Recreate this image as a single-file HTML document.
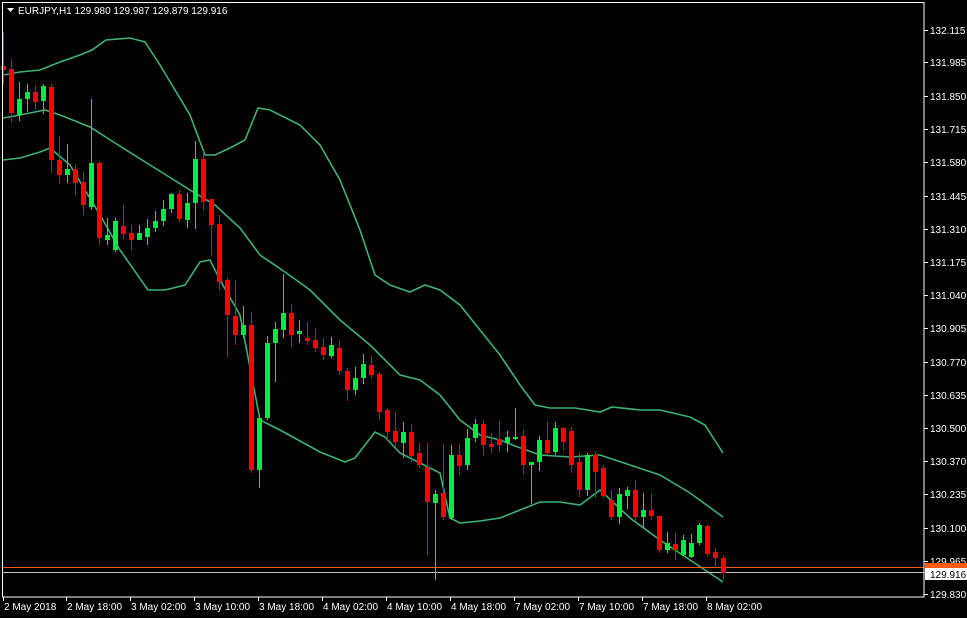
<!DOCTYPE html>
<html><head><meta charset="utf-8"><style>
html,body{margin:0;padding:0;background:#000;width:967px;height:618px;overflow:hidden}
svg{display:block}
text{font-family:"Liberation Sans",sans-serif;font-size:10px;fill:#fff}
</style></head><body>
<svg width="967" height="618" viewBox="0 0 967 618" xmlns="http://www.w3.org/2000/svg">
<rect width="967" height="618" fill="#000"/>
<g fill="none" stroke="#3cb371" stroke-width="1.6">
<polyline points="3,75 20,72 40,70 60,62 80,55 92,50 106,40 130,38 145,42 160,65 175,90 190,115 205,155 215,155 230,148 245,140 258,108 270,110 300,125 320,145 340,180 360,230 375,275 390,285 410,292 425,285 440,290 460,305 480,330 500,355 520,385 535,405 550,408 575,408 600,412 612,407 640,410 660,410 690,417 705,425 723,453"/>
<polyline points="3,118 20,115 45,110 60,115 90,127 115,143 150,165 190,190 215,205 240,228 260,255 285,272 310,290 340,320 370,345 400,375 420,380 440,395 460,420 480,435 500,440 515,446 540,455 570,457 600,455 630,465 660,475 690,493 723,517"/>
<polyline points="3,160 20,158 40,152 50,148 70,165 100,215 120,250 148,290 165,290 185,285 200,262 210,260 220,280 240,315 260,420 280,430 320,452 345,462 355,458 375,432 385,437 400,453 420,463 440,473 450,518 460,523 480,521 500,518 520,510 540,502 560,502 580,505 600,490 630,518 660,540 690,560 705,570 723,582"/>
</g>
<line x1="3" y1="567.5" x2="924" y2="567.5" stroke="#ff5a10" stroke-width="1" shape-rendering="crispEdges"/>
<line x1="3" y1="572.5" x2="924" y2="572.5" stroke="#c0c0c0" stroke-width="1" shape-rendering="crispEdges"/>
<path fill="none" stroke="#ff0000" stroke-width="1" d="M3.5 32V85M11.5 59V122M35.5 86V110M51.5 84V173M59.5 136V183M75.5 165V195M83.5 172V215M99.5 161V245M123.5 205V240M131.5 225V250M179.5 190V222M203.5 151V210M211.5 199V255M219.5 215V290M227.5 278V357M235.5 280V345M251.5 312V473M291.5 305V347M307.5 322V345M315.5 329V352M323.5 338V360M339.5 340V375M347.5 368V401M371.5 356V378M379.5 372V420M387.5 408V440M395.5 412V446M411.5 425V462M419.5 443V468M427.5 443V555M443.5 444V520M459.5 444V475M483.5 420V455M491.5 433V453M499.5 421V452M523.5 430V474M547.5 422V455M563.5 427V450M571.5 427V473M579.5 453V497M595.5 452V498M603.5 465V498M611.5 490V520M635.5 480V520M651.5 494V520M659.5 516V553M675.5 533V560M707.5 525V557M715.5 548V568M723.5 555V580"/>
<g fill="#ff0000">
<rect x="1" y="66" width="5" height="4"/><rect x="9" y="69" width="5" height="44"/><rect x="33" y="92" width="5" height="10"/><rect x="49" y="87" width="5" height="73"/><rect x="57" y="160" width="5" height="15"/><rect x="73" y="169" width="5" height="14"/><rect x="81" y="182" width="5" height="23"/><rect x="97" y="163" width="5" height="75"/><rect x="121" y="226" width="5" height="8"/><rect x="129" y="233" width="5" height="7"/><rect x="177" y="194" width="5" height="25"/><rect x="201" y="159" width="5" height="43"/><rect x="209" y="199" width="5" height="26"/><rect x="217" y="224" width="5" height="58"/><rect x="225" y="280" width="5" height="35"/><rect x="233" y="316" width="5" height="19"/><rect x="249" y="325" width="5" height="145"/><rect x="289" y="313" width="5" height="22"/><rect x="305" y="338" width="5" height="3"/><rect x="313" y="340" width="5" height="8"/><rect x="321" y="347" width="5" height="8"/><rect x="337" y="348" width="5" height="23"/><rect x="345" y="371" width="5" height="19"/><rect x="369" y="365" width="5" height="10"/><rect x="377" y="374" width="5" height="38"/><rect x="385" y="410" width="5" height="22"/><rect x="393" y="431" width="5" height="11"/><rect x="409" y="432" width="5" height="24"/><rect x="417" y="453" width="5" height="12"/><rect x="425" y="467" width="5" height="35"/><rect x="441" y="493" width="5" height="24"/><rect x="457" y="455" width="5" height="11"/><rect x="481" y="424" width="5" height="21"/><rect x="489" y="444" width="5" height="3"/><rect x="497" y="439" width="5" height="6"/><rect x="521" y="436" width="5" height="29"/><rect x="545" y="440" width="5" height="13"/><rect x="561" y="428" width="5" height="14"/><rect x="569" y="431" width="5" height="34"/><rect x="577" y="462" width="5" height="28"/><rect x="593" y="455" width="5" height="17"/><rect x="601" y="468" width="5" height="28"/><rect x="609" y="500" width="5" height="17"/><rect x="633" y="490" width="5" height="27"/><rect x="649" y="510" width="5" height="6"/><rect x="657" y="516" width="5" height="34"/><rect x="673" y="544" width="5" height="6"/><rect x="705" y="526" width="5" height="28"/><rect x="713" y="552" width="5" height="6"/><rect x="721" y="558" width="5" height="15"/>
</g>
<path fill="none" stroke="#00ee33" stroke-width="1" d="M19.5 82V121M27.5 84V112M43.5 84V114M67.5 144V183M91.5 99V210M107.5 218V245M115.5 218V252M139.5 225V240M147.5 219V245M155.5 211V232M163.5 200V226M171.5 193V213M187.5 193V228M195.5 141V229M243.5 306V338M259.5 418V488M267.5 336V420M275.5 322V382M283.5 274V338M299.5 320V343M331.5 337V358M355.5 367V395M363.5 354V384M403.5 422V458M435.5 490V580M451.5 445V520M467.5 429V470M475.5 419V442M507.5 431V452M515.5 408V440M531.5 462V504M539.5 436V471M555.5 422V455M587.5 453V496M619.5 488V524M627.5 487V509M643.5 493V528M667.5 532V553M683.5 535V556M691.5 534V558M699.5 523V545"/>
<g fill="#00ee33">
<rect x="17" y="99" width="5" height="16"/><rect x="25" y="92" width="5" height="7"/><rect x="41" y="86" width="5" height="15"/><rect x="65" y="169" width="5" height="6"/><rect x="89" y="163" width="5" height="44"/><rect x="105" y="235" width="5" height="5"/><rect x="113" y="221" width="5" height="29"/><rect x="137" y="233" width="5" height="7"/><rect x="145" y="228" width="5" height="9"/><rect x="153" y="221" width="5" height="7"/><rect x="161" y="209" width="5" height="12"/><rect x="169" y="194" width="5" height="15"/><rect x="185" y="203" width="5" height="17"/><rect x="193" y="159" width="5" height="44"/><rect x="241" y="325" width="5" height="10"/><rect x="257" y="418" width="5" height="52"/><rect x="265" y="343" width="5" height="75"/><rect x="273" y="329" width="5" height="14"/><rect x="281" y="313" width="5" height="17"/><rect x="297" y="331" width="5" height="3"/><rect x="329" y="345" width="5" height="11"/><rect x="353" y="378" width="5" height="12"/><rect x="361" y="364" width="5" height="14"/><rect x="401" y="432" width="5" height="11"/><rect x="433" y="494" width="5" height="9"/><rect x="449" y="455" width="5" height="63"/><rect x="465" y="438" width="5" height="27"/><rect x="473" y="424" width="5" height="14"/><rect x="505" y="437" width="5" height="6"/><rect x="513" y="437" width="5" height="2"/><rect x="529" y="462" width="5" height="3"/><rect x="537" y="440" width="5" height="22"/><rect x="553" y="428" width="5" height="24"/><rect x="585" y="455" width="5" height="35"/><rect x="617" y="494" width="5" height="23"/><rect x="625" y="490" width="5" height="6"/><rect x="641" y="510" width="5" height="7"/><rect x="665" y="543" width="5" height="7"/><rect x="681" y="540" width="5" height="15"/><rect x="689" y="543" width="5" height="14"/><rect x="697" y="525" width="5" height="18"/>
</g>
<rect x="2.5" y="2.5" width="921.5" height="594.5" fill="none" stroke="#fff" stroke-width="1"/>
<path d="M7 8h7l-3.5 4z" fill="#fff"/>
<text x="18" y="14">EURJPY,H1  129.980 129.987 129.879 129.916</text>
<path stroke="#fff" stroke-width="1" d="M924 30.5h4M924 62.5h4M924 96.5h4M924 129.5h4M924 162.5h4M924 196.5h4M924 229.5h4M924 262.5h4M924 295.5h4M924 328.5h4M924 362.5h4M924 395.5h4M924 428.5h4M924 461.5h4M924 494.5h4M924 528.5h4M924 561.5h4M924 594.5h4"/>
<g>
<text x="930" y="34">132.115</text><text x="930" y="66">131.985</text><text x="930" y="100">131.850</text><text x="930" y="133">131.715</text><text x="930" y="166">131.580</text><text x="930" y="200">131.445</text><text x="930" y="233">131.310</text><text x="930" y="266">131.175</text><text x="930" y="299">131.040</text><text x="930" y="332">130.905</text><text x="930" y="366">130.770</text><text x="930" y="399">130.635</text><text x="930" y="432">130.500</text><text x="930" y="465">130.370</text><text x="930" y="498">130.235</text><text x="930" y="532">130.100</text><text x="930" y="565">129.965</text><text x="930" y="598">129.830</text>
</g>
<rect x="925" y="563" width="42" height="6" fill="#ff5a10"/>
<rect x="925" y="568" width="42" height="12" fill="#fff"/>
<text x="930" y="578" style="fill:#000">129.916</text>
<path stroke="#fff" d="M3.5 597v4M66.5 597v4M130.5 597v4M194.5 597v4M258.5 597v4M322.5 597v4M386.5 597v4M450.5 597v4M514.5 597v4M578.5 597v4M642.5 597v4M706.5 597v4"/>
<g>
<text x="4" y="610">2 May 2018</text><text x="67" y="610">2 May 18:00</text><text x="131" y="610">3 May 02:00</text><text x="195" y="610">3 May 10:00</text><text x="259" y="610">3 May 18:00</text><text x="323" y="610">4 May 02:00</text><text x="387" y="610">4 May 10:00</text><text x="451" y="610">4 May 18:00</text><text x="515" y="610">7 May 02:00</text><text x="579" y="610">7 May 10:00</text><text x="643" y="610">7 May 18:00</text><text x="707" y="610">8 May 02:00</text>
</g>
</svg>
</body></html>
